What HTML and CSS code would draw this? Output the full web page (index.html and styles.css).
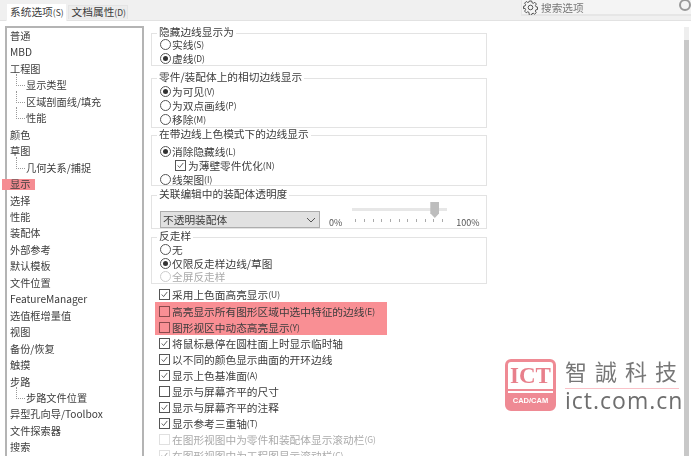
FILE: index.html
```html
<!DOCTYPE html>
<html lang="zh">
<head>
    <meta charset="UTF-8">
    <meta name="viewport" content="width=device-width, initial-scale=1.0">
    <title>系统选项</title>
    <link rel="stylesheet" href="styles.css">
</head>
<body>
    <svg class="defs" width="0" height="0">
        <symbol id="check" viewBox="0 0 13 13"><path d="M2.5 6.5 5.2 9.5 10.5 2.8" fill="none" stroke="#444" stroke-width="1.2"/></symbol>
    </svg>
    <div class="dialog">
        <div class="topbar">
            <div class="tabs">
                <div class="tab active">系统选项<small>(S)</small></div>
                <div class="tab">文档属性<small>(D)</small></div>
            </div>
            <div class="search">
                <svg class="gear" width="15" height="15" viewBox="0 0 15 15"><circle cx="7.5" cy="7.5" r="2.3" fill="none" stroke="#555"/><path d="M6.3 1h2.400l.3 1.700 1.300.6 1.500-1 1.600 1.700-1 1.400.6 1.400 1.500.3v2.400l-1.600.3-.6 1.300 1 1.500-1.700 1.600-1.400-1-1.400.6-.3 1.500H6.300L6 12.400l-1.300-.6-1.500 1-1.600-1.700 1-1.400-.6-1.400L.5 8.700V6.300l1.500-.3.6-1.400-1-1.400 1.700-1.700 1.400 1 1.400-.6z" fill="none" stroke="#555"/></svg>
                <span class="search-text">搜索选项</span>
                <span class="search-icon"></span>
            </div>
        </div>
        <div class="main">
            <ul class="tree">
                <li>普通</li>
                <li>MBD</li>
                <li>工程图</li>
                <li class="sub">显示类型</li>
                <li class="sub">区域剖面线/填充</li>
                <li class="sub">性能</li>
                <li>颜色</li>
                <li>草图</li>
                <li class="sub">几何关系/捕捉</li>
                <li class="marked">显示</li>
                <li>选择</li>
                <li>性能</li>
                <li>装配体</li>
                <li>外部参考</li>
                <li>默认模板</li>
                <li>文件位置</li>
                <li>FeatureManager</li>
                <li>选值框增量值</li>
                <li>视图</li>
                <li>备份/恢复</li>
                <li>触摸</li>
                <li>步路</li>
                <li class="sub">步路文件位置</li>
                <li>异型孔向导/Toolbox</li>
                <li>文件探索器</li>
                <li>搜索</li>
            </ul>
            <div class="options">
                <div class="group g1">
                    <div class="group-title">隐藏边线显示为</div>
                    <label class="row"><i class="radio"></i>实线<small>(S)</small></label>
                    <label class="row"><i class="radio on"></i>虚线<small>(D)</small></label>
                </div>
                <div class="group g2">
                    <div class="group-title">零件/装配体上的相切边线显示</div>
                    <label class="row"><i class="radio on"></i>为可见<small>(V)</small></label>
                    <label class="row"><i class="radio"></i>为双点画线<small>(P)</small></label>
                    <label class="row"><i class="radio"></i>移除<small>(M)</small></label>
                </div>
                <div class="group g3">
                    <div class="group-title">在带边线上色模式下的边线显示</div>
                    <label class="row"><i class="radio on"></i>消除隐藏线<small>(L)</small></label>
                    <label class="row indent"><i class="box"><svg><use href="#check"/></svg></i>为薄壁零件优化<small>(N)</small></label>
                    <label class="row"><i class="radio"></i>线架图<small>(I)</small></label>
                </div>
                <div class="group g4">
                    <div class="group-title">关联编辑中的装配体透明度</div>
                    <div class="transparency">
                        <div class="select">不透明装配体
                            <svg width="10" height="6" viewBox="0 0 10 6"><path d="M1 1l4 4 4-4" fill="none" stroke="#555"/></svg>
                        </div>
                        <span class="pct">0%</span>
                        <div class="slider">
                            <div class="track"></div>
                            <div class="thumb"></div>
                            <div class="ticks"><i></i><i></i><i></i><i></i><i></i><i></i><i></i><i></i><i></i><i></i><i></i></div>
                        </div>
                        <span class="pct">100%</span>
                    </div>
                </div>
                <div class="group g5">
                    <div class="group-title">反走样</div>
                    <label class="row"><i class="radio"></i>无</label>
                    <label class="row"><i class="radio on"></i>仅限反走样边线/草图</label>
                    <label class="row off"><i class="radio"></i>全屏反走样</label>
                </div>
                <div class="checks">
                    <label class="row"><i class="box"><svg><use href="#check"/></svg></i>采用上色面高亮显示<small>(U)</small></label>
                    <div class="marked-block">
                        <label class="row"><i class="box"></i>高亮显示所有图形区域中选中特征的边线<small>(E)</small></label>
                        <label class="row"><i class="box"></i>图形视区中动态高亮显示<small>(Y)</small></label>
                    </div>
                    <label class="row"><i class="box"><svg><use href="#check"/></svg></i>将鼠标悬停在圆柱面上时显示临时轴</label>
                    <label class="row"><i class="box"><svg><use href="#check"/></svg></i>以不同的颜色显示曲面的开环边线</label>
                    <label class="row"><i class="box"><svg><use href="#check"/></svg></i>显示上色基准面<small>(A)</small></label>
                    <label class="row"><i class="box"></i>显示与屏幕齐平的尺寸</label>
                    <label class="row"><i class="box"><svg><use href="#check"/></svg></i>显示与屏幕齐平的注释</label>
                    <label class="row"><i class="box"><svg><use href="#check"/></svg></i>显示参考三重轴<small>(T)</small></label>
                    <label class="row off"><i class="box"></i>在图形视图中为零件和装配体显示滚动栏<small>(G)</small></label>
                    <label class="row off"><i class="box"><svg><use href="#check"/></svg></i>在图形视图中为工程图显示滚动栏<small>(C)</small></label>
                </div>
            </div>
            <div class="logo">
                <div class="logo-mark">
                    <span class="logo-ict">ICT</span>
                    <span class="logo-cad">CAD/CAM</span>
                </div>
                <div class="logo-text">
                    <div class="logo-cn">智誠科技</div>
                    <div class="logo-url">ict.com.cn</div>
                </div>
            </div>
            <div class="scrollbar"><div class="scroll-thumb"></div></div>
        </div>
    </div>
</body>
</html>
```

FILE: styles.css
```css
* {
    box-sizing: border-box;
}
html, body {
    height: 100%;
}
body {
    margin: 0;
    overflow: hidden;
    background-color: #fff;
    color: #3c3c3c;
    font-family: "Noto Sans CJK SC", "Noto Sans", sans-serif;
    font-size: 10.7px;
}
.defs {
    position: absolute;
}
small {
    font-size: 8.5px;
}
.dialog {
    height: 456px;
    display: flex;
    flex-direction: column;
    filter: blur(0.4px);
}
.topbar {
    height: 21px;
    flex: none;
    display: flex;
    background-color: #f0f0f0;
    border-bottom: 1px solid #e2e2e2;
}
.tabs {
    display: flex;
    padding: 3px 0 0 6px;
}
.tab {
    height: 14px;
    margin: 2px 0 0 1px;
    padding: 0 1px 0 3px;
    line-height: 12px;
    background-color: #ececec;
    border: 1px solid #e4e4e4;
    border-bottom: none;
    white-space: nowrap;
}
.tab.active {
    height: 18px;
    margin: 0;
    padding: 0 2px 0 3px;
    line-height: 16px;
    background-color: #fff;
    border-color: #f0f0f0;
}
.search {
    margin-left: 393px;
    flex: 1;
    height: 16px;
    display: flex;
    align-items: center;
    gap: 3px;
    padding-left: 1px;
    border-bottom: 2px solid #e6e6e6;
    border-left: 1px solid #e6e6e6;
    background-color: #f4f4f4;
    color: #777;
}
.gear {
    flex: none;
}
.search-icon {
    width: 12px;
    height: 12px;
    margin: -4px 0 0 auto;
    border: 2px solid #999;
    border-radius: 50%;
}
.main {
    position: relative;
    flex: 1;
    display: flex;
    overflow: hidden;
}
.tree {
    list-style: none;
    margin: 5px 0 0 5px;
    padding: 0 0 0 3px;
    width: 139px;
    height: 460px;
    flex: none;
    border: 2px solid #b4b4b4;
    border-bottom: none;
    font-size: 10.2px;
}
.tree li {
    height: 16.46px;
    line-height: 16.46px;
    white-space: nowrap;
}
.tree li.sub {
    position: relative;
    padding-left: 16px;
}
.tree li.sub::before {
    content: "";
    position: absolute;
    left: 6px;
    top: -3px;
    width: 8px;
    height: 11px;
    border-left: 1px dotted #999;
    border-bottom: 1px dotted #999;
}
.tree li.marked {
    width: 33px;
    margin-left: -8px;
    padding-left: 8px;
    background: linear-gradient(#f58c92, #f58c92) no-repeat center / 100% 11px;
}
.options {
    flex: none;
    width: 340px;
    margin-left: 7px;
    padding-top: 12px;
}
.group {
    width: 336px;
    padding-left: 8px;
    border: 1px solid #e3e3e3;
}
.group-title {
    width: fit-content;
    height: 10px;
    margin: -7px 0 0 -3px;
    padding: 0 2px;
    line-height: 10px;
    background-color: #fff;
    white-space: nowrap;
}
.row {
    display: flex;
    align-items: center;
    height: 14px;
    white-space: nowrap;
}
.g1 {
    height: 33px;
}
.g2 {
    height: 50px;
    margin-top: 12px;
}
.g2 .group-title {
    margin-bottom: 2px;
}
.g3 {
    height: 51px;
    margin-top: 7px;
}
.g3 .group-title {
    margin-bottom: 5px;
}
.g4 {
    height: 34px;
    margin-top: 9px;
}
.g4 .group-title {
    margin-bottom: 1px;
}
.g5 {
    height: 47px;
    margin-top: 8px;
}
.g5 .group-title {
    margin-bottom: 2px;
}
.g5 .row {
    height: 13.5px;
}
.row.indent {
    margin-left: 15px;
}
.off {
    color: #aaa;
}
.radio {
    flex: none;
    width: 11px;
    height: 11px;
    margin-right: 1px;
    border: 1px solid #555;
    border-radius: 50%;
    background-color: #fff;
    display: flex;
    align-items: center;
    justify-content: center;
}
.radio.on::after {
    content: "";
    width: 5px;
    height: 5px;
    border-radius: 50%;
    background-color: #333;
}
.off .radio {
    border-color: #ccc;
}
.box {
    flex: none;
    width: 11px;
    height: 11px;
    margin-right: 2px;
    border: 1px solid #555;
    background-color: #fff;
}
.marked-block .box {
    background: none;
    border-color: #8a4a4d;
}
.box svg {
    display: block;
    width: 9px;
    height: 9px;
}
.off .box {
    border-color: #ccc;
    opacity: 0.6;
}
.transparency {
    display: flex;
    align-items: flex-end;
    height: 28px;
}
.select {
    width: 160px;
    height: 17px;
    display: flex;
    align-items: center;
    justify-content: space-between;
    padding: 0 3px 0 2px;
    background-color: #e1e1e1;
    border: 1px solid #adadad;
}
.pct {
    font-size: 9px;
    line-height: 10px;
    color: #555;
    margin-left: 9px;
}
.slider {
    position: relative;
    width: 95px;
    height: 28px;
    margin-left: 10px;
}
.track {
    position: absolute;
    top: 8px;
    left: 0;
    right: 0;
    height: 3px;
    background-color: #e7e7e7;
}
.thumb {
    position: absolute;
    left: 78px;
    top: 2px;
    width: 9px;
    height: 16px;
    background-color: #bdbdbd;
    clip-path: polygon(0 0, 100% 0, 100% 70%, 50% 100%, 0 70%);
}
.ticks {
    position: absolute;
    left: 3px;
    right: 4px;
    top: 19px;
    display: flex;
    justify-content: space-between;
}
.ticks i {
    width: 1px;
    height: 3px;
    background-color: #aaa;
}
.checks {
    padding: 2px 0 0 8px;
}
.checks .row {
    height: 16px;
}
.marked-block {
    width: 232px;
    height: 33px;
    margin-left: -4px;
    padding: 1px 0 0 4px;
    background-color: #f98f94;
}
.logo {
    position: absolute;
    left: 505px;
    top: 338px;
    display: flex;
    gap: 9px;
}
.logo-mark {
    width: 51px;
    height: 52px;
    border: 3px solid #ef8a94;
    border-radius: 6px;
    display: flex;
    flex-direction: column;
    align-items: center;
    color: #e8808c;
    background-color: #fff;
}
.logo-ict {
    width: 100%;
    height: 29px;
    text-align: center;
    font-family: "Liberation Serif", serif;
    font-weight: bold;
    font-size: 23px;
    line-height: 27px;
    border-bottom: 2px solid #ef8a94;
}
.logo-cad {
    width: 100%;
    flex: 1;
    background-color: #ef8a94;
    color: #fff;
    font-family: "Liberation Sans", sans-serif;
    font-weight: bold;
    font-size: 7.5px;
    line-height: 15px;
    text-align: center;
    border-top: 2px solid #fff;
}
.logo-text {
    width: 114px;
}
.logo-cn {
    height: 30px;
    font-family: "Noto Sans CJK TC", sans-serif;
    font-size: 22px;
    line-height: 22px;
    letter-spacing: 8px;
    color: #777;
    border-bottom: 1px solid #f9c2c8;
    white-space: nowrap;
}
.logo-url {
    font-family: "Open Sans", sans-serif;
    font-size: 23px;
    line-height: 22px;
    letter-spacing: 1px;
    color: #6e6e6e;
    white-space: nowrap;
}
.scrollbar {
    position: absolute;
    top: 6px;
    right: 2px;
    bottom: 0;
    width: 5px;
    background-color: #eee;
}
.scroll-thumb {
    margin-top: 13px;
    height: 420px;
    background-color: #c8c8c8;
}
```
